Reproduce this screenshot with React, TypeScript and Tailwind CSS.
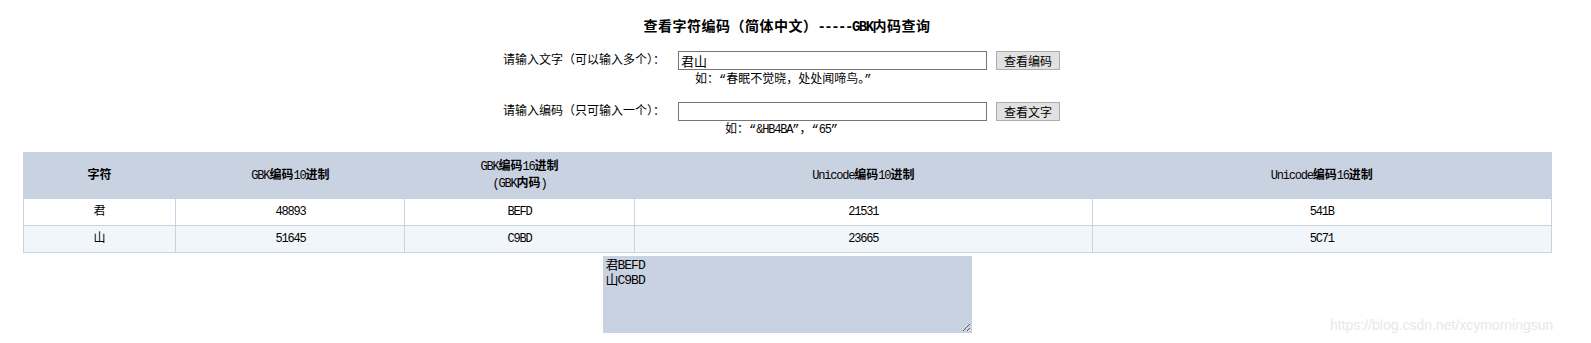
import React from "react";

const FONT = "font-['Liberation_Mono','Noto_Sans_CJK_SC',monospace]";

// SimSun latin glyphs are half-width; squeeze Liberation Mono to match
function L({ children }: { children: React.ReactNode }) {
  return <span className="tracking-[-1.2px]">{children}</span>;
}

const ROWS = [
  { ch: "君", gbk10: "48893", gbk16: "BEFD", uni10: "21531", uni16: "541B" },
  { ch: "山", gbk10: "51645", gbk16: "C9BD", uni10: "23665", uni16: "5C71" },
];

export default function App() {
  return (
    <div className={`relative w-[1591px] h-[343px] bg-white text-black ${FONT}`}>
      <div className="w-[1574px] pt-[17px]">
        <h3 className="h-[20px] leading-[20px] text-center text-[14px] font-bold tracking-[0.5px]">
          查看字符编码（简体中文）<span className="tracking-[-1.5px]">-----GBK</span>内码查询
        </h3>

        <div className="ml-[503px] text-[12px]">
          <div className="mt-[14px] flex items-center h-[19px]">
            <label className="w-[175px] leading-[14px]">请输入文字（可以输入多个）：</label>
            <input
              defaultValue="君山"
              className="w-[309px] h-[19px] border border-[#767676] px-[2px] text-[13px] leading-[17px] outline-none font-['Noto_Sans_CJK_SC',sans-serif]"
            />
            <button className="ml-[9px] w-[64px] h-[19px] border border-[#adadad] bg-[#e1e1e1] text-[12px] leading-[17px] font-['Noto_Sans_CJK_SC',sans-serif]">
              查看编码
            </button>
          </div>
          <div className="mt-[3px] h-[14px] leading-[14px] ml-[192px]">如：“春眠不觉晓，处处闻啼鸟。”</div>

          <div className="mt-[15px] flex items-center h-[19px]">
            <label className="w-[175px] leading-[14px]">请输入编码（只可输入一个）：</label>
            <input className="w-[309px] h-[19px] border border-[#767676] px-[2px] text-[13px] outline-none" />
            <button className="ml-[9px] w-[64px] h-[19px] border border-[#adadad] bg-[#e1e1e1] text-[12px] leading-[17px] font-['Noto_Sans_CJK_SC',sans-serif]">
              查看文字
            </button>
          </div>
          <div className="mt-[2px] h-[14px] leading-[14px] ml-[222px]">
            如：“<L>&HB4BA</L>”，“<L>65</L>”
          </div>
        </div>

        <table className="mt-[15px] mx-auto w-[1529px] border-collapse text-[12px] text-center">
          <thead>
            <tr className="bg-[#c9d2e1] h-[46px]">
              <th className="w-[10%] border border-[#c9d2e1] font-bold">字符</th>
              <th className="w-[15%] border border-[#c9d2e1] font-bold">
                <span className="font-normal"><L>GBK</L></span>编码<span className="font-normal"><L>10</L></span>进制
              </th>
              <th className="w-[15%] border border-[#c9d2e1] font-bold leading-[17px]">
                <span className="font-normal"><L>GBK</L></span>编码<span className="font-normal"><L>16</L></span>进制
                <br />
                <span className="font-normal"><L>(GBK</L></span>内码<span className="font-normal"><L>)</L></span>
              </th>
              <th className="w-[30%] border border-[#c9d2e1] font-bold">
                <span className="font-normal"><L>Unicode</L></span>编码<span className="font-normal"><L>10</L></span>进制
              </th>
              <th className="w-[30%] border border-[#c9d2e1] font-bold">
                <span className="font-normal"><L>Unicode</L></span>编码<span className="font-normal"><L>16</L></span>进制
              </th>
            </tr>
          </thead>
          <tbody>
            {ROWS.map((r, i) => (
              <tr key={r.ch} className={`h-[27px] ${i % 2 ? "bg-[#f0f6fa]" : "bg-white"}`}>
                <td className="border border-[#c9d2e1]">{r.ch}</td>
                <td className="border border-[#c9d2e1]"><L>{r.gbk10}</L></td>
                <td className="border border-[#c9d2e1]"><L>{r.gbk16}</L></td>
                <td className="border border-[#c9d2e1]"><L>{r.uni10}</L></td>
                <td className="border border-[#c9d2e1]"><L>{r.uni16}</L></td>
              </tr>
            ))}
          </tbody>
        </table>

        <textarea
          readOnly
          defaultValue={"君BEFD\n山C9BD"}
          className="block mx-auto mt-[3px] w-[369px] h-[77px] bg-[#c9d2e1] border border-[#c9d2e1] px-[2px] pt-[1px] text-[13px] leading-[15px] tracking-[-1px] outline-none"
        />
      </div>

      <div className="absolute left-[1330px] top-[316px] text-[14px] leading-[18px] text-[#e8e8e8] font-['Liberation_Sans',sans-serif]">
        https://blog.csdn.net/xcymorningsun
      </div>
    </div>
  );
}
